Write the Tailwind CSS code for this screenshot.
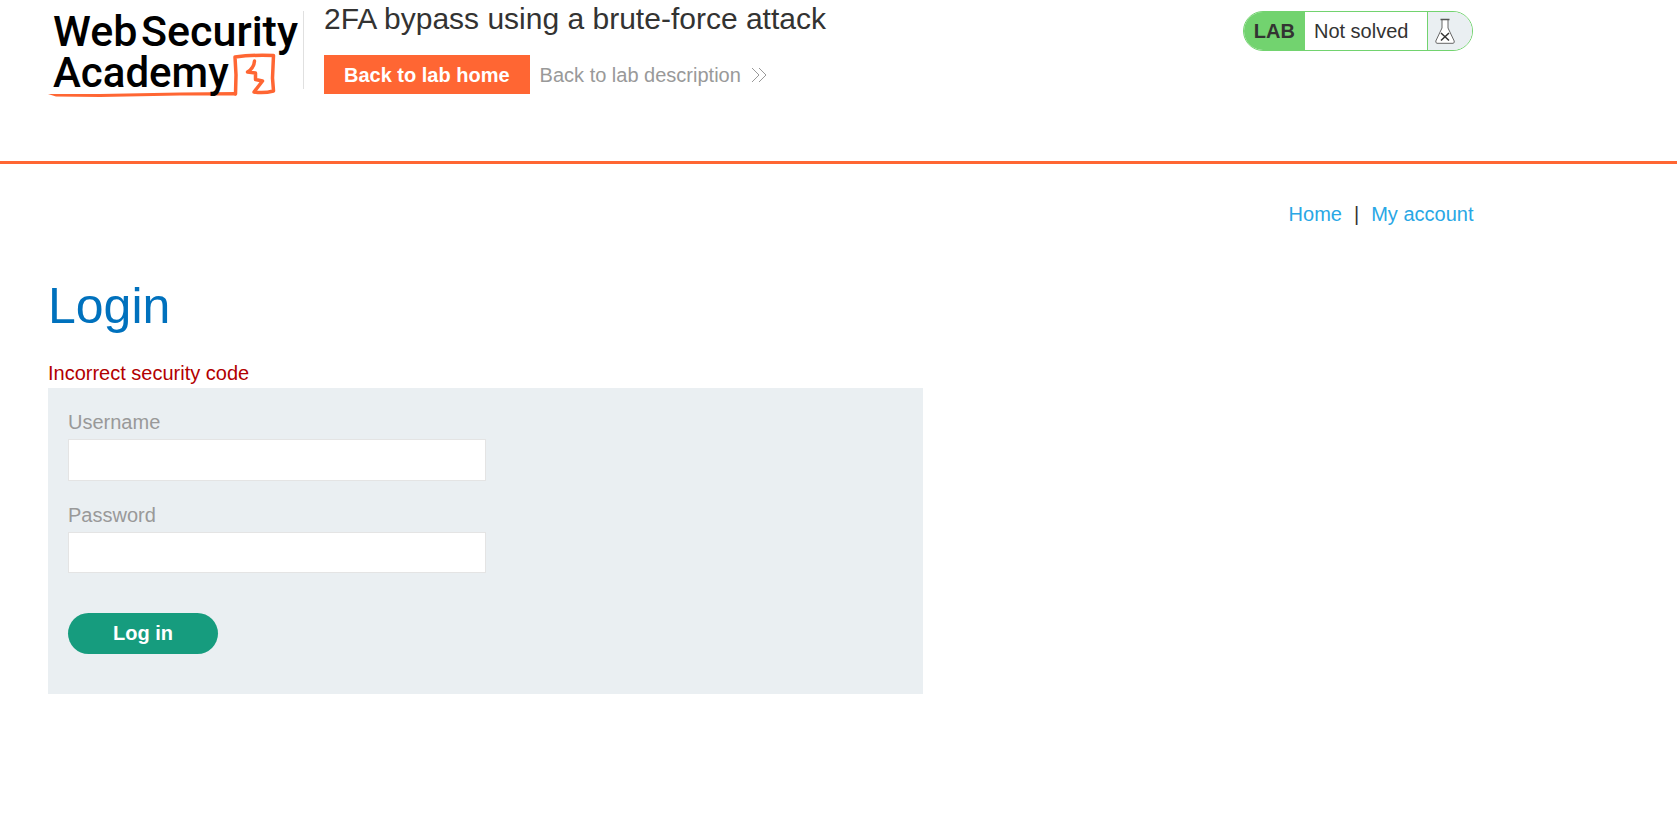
<!DOCTYPE html>
<html lang="en">
<head>
<meta charset="utf-8">
<meta name="viewport" content="width=device-width, initial-scale=1">
<title>2FA bypass using a brute-force attack</title>
<script src="https://cdn.jsdelivr.net/npm/@tailwindcss/browser@4"></script>
</head>
<body class="bg-white font-['Liberation_Sans',Arial,sans-serif] text-[20px] leading-7 text-[#333332]">
<header class="border-b-3 border-[#ff6633] pb-[61px]">
  <div class="ml-12 flex w-[85%] items-start">
    <a href="#" aria-label="Web Security Academy" class="mt-2 shrink-0">
      <svg class="block h-23 w-[252px] overflow-visible" viewBox="48 8 252 92" role="img">
        <path d="M235.500 94 L236 75 L235 57 Q254 54.500 273.500 55.500 L272.500 78 L273.500 91 Q264 93.500 254 92 L262.500 81 L255.500 79.500 L255.500 73 L247.500 72 Q254 68 254.500 61" fill="none" stroke="#ff6633" stroke-width="3.500" stroke-linejoin="round" stroke-linecap="round"/>
        <path fill="#ff6633" d="M48 94 L100 94 L180 92.500 L236 92 V95.500 L180 95.500 L100 97 L56 96.500 Z"/>
        <g fill="#000" font-family="Roboto, sans-serif" font-weight="500">
          <text x="53" y="46" font-size="43">Web</text>
          <text x="141" y="46" font-size="43">Security</text>
          <text x="53" y="87" font-size="42">Academy</text>
        </g>
      </svg>
    </a>
    <div class="mt-[11px] ml-[3px] h-[78px] w-px shrink-0 bg-[#e0e0e0]"></div>
    <div class="ml-5">
      <h1 class="text-[30px] leading-[38px]">2FA bypass using a brute-force attack</h1>
      <div class="mt-[17px] flex items-center gap-[10px]">
        <a href="#" class="bg-[#ff6633] px-5 pt-[6px] pb-[5px] font-bold text-white">Back to lab home</a>
        <a href="#" class="flex items-center gap-[10px] text-[#999999]">Back to lab description
          <svg class="h-4 w-4" viewBox="0 0 16 16" fill="none" stroke="#999" stroke-width="1"><path d="M1 1 L8 8 L1 15 M8 1 L15 8 L8 15"/></svg>
        </a>
      </div>
    </div>
    <div class="mt-[11px] ml-auto flex h-10 items-stretch overflow-hidden rounded-full border border-[#72d36f] bg-white">
      <span class="bg-[#72d36f] px-[10px] leading-[38px] font-bold">LAB</span>
      <span class="pr-[19px] pl-[9px] leading-[38px]">Not solved</span>
      <span class="flex w-[45px] items-center border-l border-[#72d36f] bg-[#eaeff2] pl-[7px]">
        <svg class="h-[26px] w-5" viewBox="0 0 20 26" fill="none">
          <path d="M7 1.500 V10 L.8 23 Q.5 25 2 25.300 H18 Q19.800 25 19.200 23 L13 10 V1.500 Z" fill="#fff" stroke="#666" stroke-width="1"/>
          <path d="M5.500 1.500 H14.500" stroke="#555" stroke-width="1.500"/>
          <path d="M6 15 L14 22.500 M14 15 L6 22.500" stroke="#333" stroke-width="1.500"/>
        </svg>
      </span>
    </div>
  </div>
</header>
<main class="ml-12 w-[85%] pt-9">
  <nav class="flex justify-end gap-3">
    <a href="#" class="text-[#29a7e5]">Home</a><span>|</span><a href="#" class="text-[#29a7e5]">My account</a>
  </nav>
  <h2 class="mt-12 text-[50px] leading-[60px] text-[#0071bd]">Login</h2>
  <p class="mt-6 pb-[2px] leading-[26px] text-[#b30000]">Incorrect security code</p>
  <form class="w-full max-w-[875px] bg-[#eaeff2] px-5 pt-5 pb-10">
    <label for="username" class="block pb-[3px] text-[#999999]">Username</label>
    <input id="username" type="text" class="block h-[42px] w-1/2 border border-[#e4e4e4] bg-white px-2">
    <label for="password" class="mt-5 block pb-[3px] text-[#999999]">Password</label>
    <input id="password" type="password" class="block h-[41px] w-1/2 border border-[#e4e4e4] bg-white px-2">
    <button type="submit" class="mt-10 block h-[41px] w-[150px] rounded-full bg-[#169c7e] pb-px font-bold text-white">Log in</button>
  </form>
</main>
</body>
</html>
